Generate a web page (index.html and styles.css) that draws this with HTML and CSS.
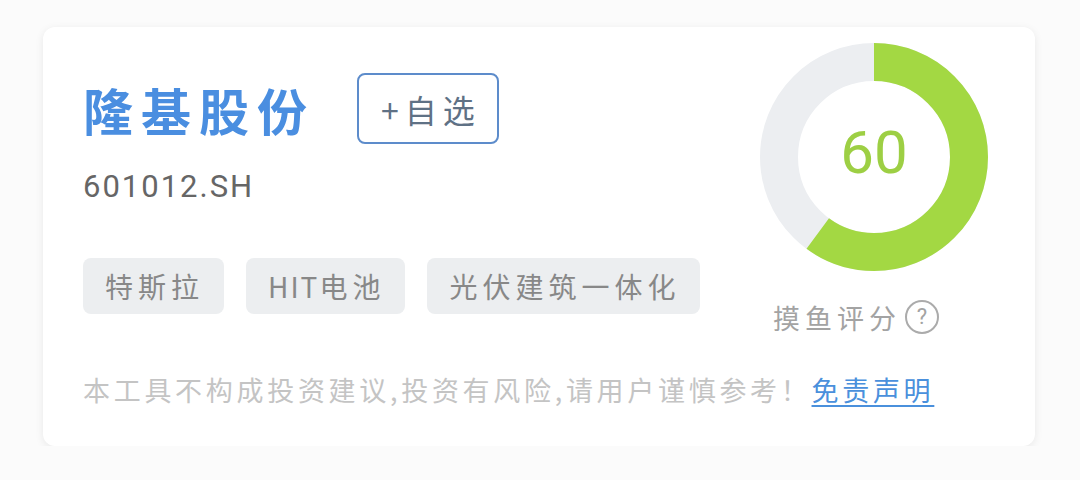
FILE: index.html
```html
<!DOCTYPE html>
<html lang="zh-CN">
<head>
  <meta charset="UTF-8">
  <title>隆基股份</title>
  <link rel="stylesheet" href="styles.css">
</head>
<body>

  <div class="card">
    <div class="top">
      <div class="info">
        <div class="head">
          <h1 class="name">隆基股份</h1>
          <button class="watch">+自选</button>
        </div>
        <div class="code">601012.SH</div>

        <div class="tags">
          <span class="tag">特斯拉</span>
          <span class="tag"><span class="latin">HIT</span>电池</span>
          <span class="tag">光伏建筑一体化</span>
        </div>
      </div>

      <div class="score">
        <div class="ring">
          <svg width="228" height="228" viewBox="0 0 228 228">
            <circle cx="114" cy="114" r="95" fill="none" stroke="#eceef1" stroke-width="38"/>
            <circle cx="114" cy="114" r="95" fill="none" stroke="#a3d843" stroke-width="38"
                    stroke-dasharray="358.1 596.9" transform="rotate(-90 114 114)"/>
          </svg>
          <div class="value">60</div>
        </div>
        <div class="label">摸鱼评分 <span class="help">?</span></div>
      </div>
    </div>

    <p class="note">本工具不构成投资建议,投资有风险,请用户谨慎参考！<a href="#">免责声明</a></p>
  </div>

</body>
</html>
```

FILE: styles.css
```css
body {
  margin: 0;
  background-color: #fbfbfb;
  font-family: "Noto Sans CJK SC", "Noto Sans", sans-serif;
}

.card {
  box-sizing: border-box;
  width: 992px;
  height: 419px;
  margin: 27px 0 0 43px;
  padding: 16px 47px 0 40px;
  background: white;
  border-radius: 12px;
  box-shadow: 0 2px 8px rgba(0,0,0,0.08);
}

.top {
  display: flex;
}

.info {
  flex: 1;
  padding-top: 30px;
}

.head {
  display: flex;
  align-items: center;
  height: 71px;
}

.name {
  margin: 0 42px 0 0;
  font-size: 50px;
  line-height: 1;
  font-weight: bold;
  letter-spacing: 8px;
  color: #4a8ee0;
}

.watch {
  box-sizing: border-box;
  width: 142px;
  height: 71px;
  padding: 0 0 0 6px;
  background: white;
  border: 2px solid #5d8ccb;
  border-radius: 8px;
  font-family: "Noto Sans CJK SC", sans-serif;
  font-size: 32px;
  letter-spacing: 6px;
  color: #5f7185;
}

.code {
  margin-top: 27px;
  font-family: Roboto, "Noto Sans", sans-serif;
  font-size: 31px;
  line-height: 1;
  letter-spacing: 2px;
  color: #666;
}

.tags {
  display: flex;
  gap: 22px;
  margin-top: 56px;
}

.tag {
  display: flex;
  align-items: center;
  height: 56px;
  padding: 0 20px 0 22px;
  background-color: #eceef0;
  border-radius: 8px;
  font-size: 28px;
  letter-spacing: 5px;
  color: #888;
}

.tag .latin {
  letter-spacing: 2px;
}

.note {
  margin: 42px 0 0;
  font-size: 27px;
  line-height: 1;
  letter-spacing: 3.7px;
  white-space: nowrap;
  color: #c4c4c4;
}

.note a {
  color: #4a90dc;
  text-decoration: underline;
  text-underline-offset: 4px;
}

.score {
  display: flex;
  flex-direction: column;
  width: 228px;
}

.ring {
  position: relative;
  height: 228px;
}

.ring svg {
  display: block;
}

.value {
  position: absolute;
  top: 0;
  left: 0;
  right: 0;
  bottom: 10px;
  display: flex;
  align-items: center;
  justify-content: center;
  font-family: Roboto, sans-serif;
  font-size: 60px;
  color: #9dcf44;
}

.label {
  display: flex;
  align-items: center;
  height: 34px;
  margin-top: 29px;
  padding-left: 13px;
  font-size: 27px;
  line-height: 1;
  letter-spacing: 5px;
  color: #a3a3a3;
}

.help {
  display: flex;
  align-items: center;
  justify-content: center;
  width: 30px;
  height: 30px;
  margin-left: 4px;
  border: 2px solid #ababab;
  border-radius: 50%;
  font-family: Roboto, sans-serif;
  font-size: 22px;
  letter-spacing: 0;
  color: #a3a3a3;
}
```
